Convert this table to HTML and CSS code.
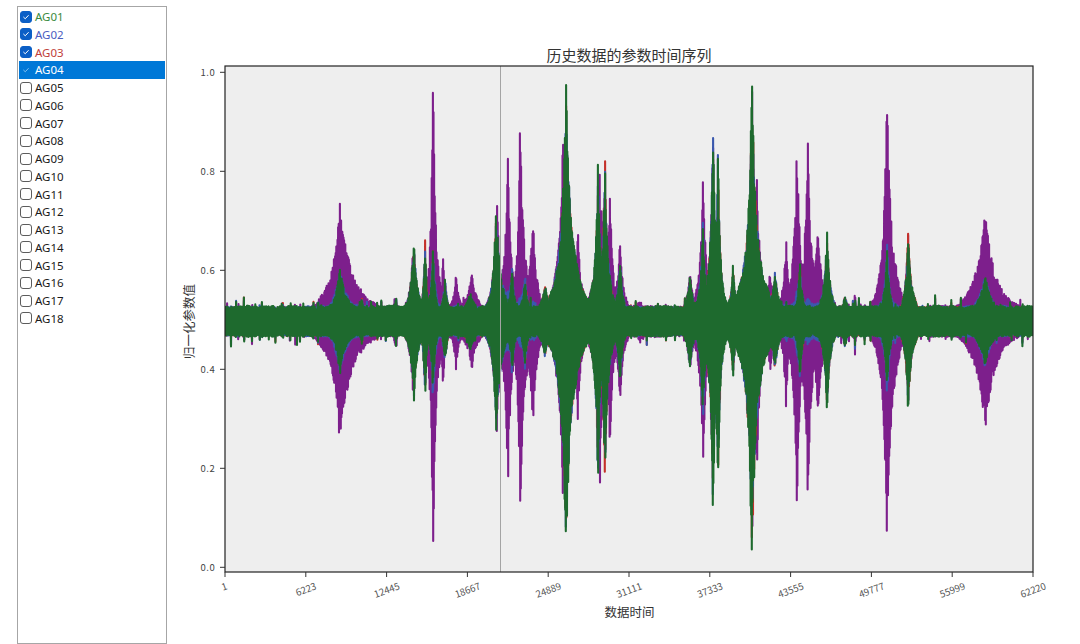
FILE: index.html
```html
<!DOCTYPE html>
<html lang="zh-CN">
<head>
<meta charset="utf-8">
<title>历史数据的参数时间序列</title>
<link rel="stylesheet" href="styles.css">
</head>
<body>
<div class="app">
  <ul class="list">
    <li class="item"><span class="cb on"><svg viewBox="0 0 12 12" class="ck"><path d="M3.2 6.3 L5.1 8.1 L8.8 4.2"/></svg></span><span class="c1">AG01</span></li>
    <li class="item"><span class="cb on"><svg viewBox="0 0 12 12" class="ck"><path d="M3.2 6.3 L5.1 8.1 L8.8 4.2"/></svg></span><span class="c2">AG02</span></li>
    <li class="item"><span class="cb on"><svg viewBox="0 0 12 12" class="ck"><path d="M3.2 6.3 L5.1 8.1 L8.8 4.2"/></svg></span><span class="c3">AG03</span></li>
    <li class="item sel"><span class="cb on"><svg viewBox="0 0 12 12" class="ck"><path d="M3.2 6.3 L5.1 8.1 L8.8 4.2"/></svg></span><span>AG04</span></li>
    <li class="item"><span class="cb"></span><span>AG05</span></li>
    <li class="item"><span class="cb"></span><span>AG06</span></li>
    <li class="item"><span class="cb"></span><span>AG07</span></li>
    <li class="item"><span class="cb"></span><span>AG08</span></li>
    <li class="item"><span class="cb"></span><span>AG09</span></li>
    <li class="item"><span class="cb"></span><span>AG10</span></li>
    <li class="item"><span class="cb"></span><span>AG11</span></li>
    <li class="item"><span class="cb"></span><span>AG12</span></li>
    <li class="item"><span class="cb"></span><span>AG13</span></li>
    <li class="item"><span class="cb"></span><span>AG14</span></li>
    <li class="item"><span class="cb"></span><span>AG15</span></li>
    <li class="item"><span class="cb"></span><span>AG16</span></li>
    <li class="item"><span class="cb"></span><span>AG17</span></li>
    <li class="item"><span class="cb"></span><span>AG18</span></li>
  </ul>
  <svg class="chart" viewBox="167 0 913 644" xmlns="http://www.w3.org/2000/svg">
    <defs>
      <clipPath id="axclip"><rect x="225" y="66" width="808" height="506"/></clipPath>
    </defs>
    <rect class="axbg" x="225" y="66" width="808" height="506"/>
    <g clip-path="url(#axclip)">
      <path id="s-purple" class="series sp"/>
      <path id="s-red" class="series sr"/>
      <path id="s-blue" class="series sb"/>
      <path id="s-green" class="series sg"/>
      <line class="cursor" x1="500.5" y1="66" x2="500.5" y2="572"/>
    </g>
    <rect class="spine" x="225" y="66" width="808" height="506"/>

    <g class="ticks">
      <line x1="220" y1="72.3" x2="225" y2="72.3"/>
      <line x1="220" y1="171.3" x2="225" y2="171.3"/>
      <line x1="220" y1="270.3" x2="225" y2="270.3"/>
      <line x1="220" y1="369.3" x2="225" y2="369.3"/>
      <line x1="220" y1="468.3" x2="225" y2="468.3"/>
      <line x1="220" y1="567.3" x2="225" y2="567.3"/>
      <line x1="225" y1="572" x2="225" y2="577"/>
      <line x1="305.8" y1="572" x2="305.8" y2="577"/>
      <line x1="386.6" y1="572" x2="386.6" y2="577"/>
      <line x1="467.4" y1="572" x2="467.4" y2="577"/>
      <line x1="548.2" y1="572" x2="548.2" y2="577"/>
      <line x1="629" y1="572" x2="629" y2="577"/>
      <line x1="709.8" y1="572" x2="709.8" y2="577"/>
      <line x1="790.6" y1="572" x2="790.6" y2="577"/>
      <line x1="871.4" y1="572" x2="871.4" y2="577"/>
      <line x1="952.2" y1="572" x2="952.2" y2="577"/>
      <line x1="1033" y1="572" x2="1033" y2="577"/>
    </g>

    <g class="ylab">
      <text x="215.5" y="72.3">1.0</text>
      <text x="215.5" y="171.3">0.8</text>
      <text x="215.5" y="270.3">0.6</text>
      <text x="215.5" y="369.3">0.4</text>
      <text x="215.5" y="468.3">0.2</text>
      <text x="215.5" y="567.3">0.0</text>
    </g>
    <g class="xlab">
      <text transform="translate(224,586.2) rotate(-20)">1</text>
      <text transform="translate(305.8,588.9) rotate(-20)">6223</text>
      <text transform="translate(386.6,589.7) rotate(-20)">12445</text>
      <text transform="translate(467.4,589.7) rotate(-20)">18667</text>
      <text transform="translate(548.2,589.7) rotate(-20)">24889</text>
      <text transform="translate(629,589.7) rotate(-20)">31111</text>
      <text transform="translate(709.8,589.7) rotate(-20)">37333</text>
      <text transform="translate(790.6,589.7) rotate(-20)">43555</text>
      <text transform="translate(871.4,589.7) rotate(-20)">49777</text>
      <text transform="translate(952.2,589.7) rotate(-20)">55999</text>
      <text transform="translate(1033,589.7) rotate(-20)">62220</text>
    </g>

    <text class="ttl" x="629" y="54">历史数据的参数时间序列</text>
    <text class="axlabel" x="629.5" y="611">数据时间</text>
    <text class="axlabel" transform="translate(188.5,321.5) rotate(-90)">归一化参数值</text>
  </svg>
</div>
<script src="script.js"></script>
</body>
</html>
```

FILE: styles.css
```css
html, body {
  margin: 0;
  padding: 0;
  background: #ffffff;
}
body {
  width: 1080px;
  height: 644px;
  overflow: hidden;
  font-family: "Noto Sans", "Noto Sans CJK SC", sans-serif;
}
.app {
  display: flex;
  align-items: flex-start;
  height: 644px;
}
.list {
  list-style: none;
  margin: 6px 0 0 17px;
  padding: 0.75px 1px;
  box-sizing: border-box;
  width: 150px;
  height: 638px;
  border: 1px solid #a6a6a6;
  flex: none;
}
.item {
  display: flex;
  align-items: center;
  height: 17.75px;
  font-size: 11.5px;
  color: #1a1a1a;
}
.cb {
  width: 12px;
  height: 12px;
  box-sizing: border-box;
  border: 1px solid #5c5c5c;
  border-radius: 3px;
  margin: 0 3px 0 1px;
  background: #ffffff;
  display: flex;
  align-items: center;
  justify-content: center;
  flex: none;
}
.cb.on {
  background: #0b5fc6;
  border-color: #0b5fc6;
}
.ck {
  width: 12px;
  height: 12px;
  display: block;
}
.ck path {
  fill: none;
  stroke: #ffffff;
  stroke-width: 1.2;
  stroke-linecap: round;
  stroke-linejoin: round;
}
.item.sel {
  background: #0078d7;
  color: #ffffff;
}
.item.sel .cb {
  background: transparent;
  border-color: transparent;
}
.item.sel .ck path {
  stroke: #86c0ef;
}
.c1 { color: #3a8a3e; }
.c2 { color: #4b5cbf; }
.c3 { color: #c0403a; }

.chart {
  display: block;
  width: 913px;
  height: 644px;
  flex: none;
}
.axbg { fill: #eeeeee; }
.spine {
  fill: none;
  stroke: #222222;
  stroke-width: 1.2;
}
.cursor {
  stroke: #a4a4a4;
  stroke-width: 1;
}
.series {
  fill: none;
  stroke-width: 2.1;
  stroke-linejoin: round;
}
.sp { stroke: #7d1f8c; }
.sr { stroke: #c4302a; }
.sb { stroke: #3a58ad; }
.sg { stroke: #1e6a2e; }
.ticks line {
  stroke: #333333;
  stroke-width: 1;
}
.ylab text {
  font-family: "Noto Sans CJK SC", sans-serif;
  font-size: 9.5px;
  fill: #444444;
  text-anchor: end;
  dominant-baseline: central;
  letter-spacing: 0.6px;
}
.xlab text {
  font-family: "Noto Sans CJK SC", sans-serif;
  font-size: 9.5px;
  fill: #555555;
  text-anchor: middle;
  dominant-baseline: central;
}
.ttl {
  font-family: "Noto Sans CJK SC", sans-serif;
  font-size: 15px;
  fill: #333333;
  text-anchor: middle;
  dominant-baseline: central;
}
.axlabel {
  font-family: "Noto Sans CJK SC", sans-serif;
  font-size: 12.5px;
  fill: #333333;
  text-anchor: middle;
  dominant-baseline: central;
}
```

FILE: script.js
```js
(function () {
  function rng(seed) {
    return function () {
      seed |= 0; seed = (seed + 0x6D2B79F5) | 0;
      var t = Math.imul(seed ^ (seed >>> 15), 1 | seed);
      t = (t + Math.imul(t ^ (t >>> 7), 61 | t)) ^ t;
      return ((t ^ (t >>> 14)) >>> 0) / 4294967296;
    };
  }
  var X0 = 225, X1 = 1033, Y0 = 567.3, SC = 495;

  var green = [
    [231,0.055,1],[244,0.062,1],[252,0.045,1],[262,0.05,1.2],[272,0.04,1],
    [283,0.047,1.2],[300,0.045,1.2],[318,0.05,3],[340,0.10,12,16],[362,0.055,4],
    [396,0.055,3],[414,0.16,7],[425,0.17,3],[433,0.16,4],[445,0.09,5],
    [470,0.06,15],[496,0.215,6,9],[512,0.11,5],[525,0.09,6],[545,0.08,10],
    [566,0.5,8,10],[598,0.325,5],[605,0.335,5],[620,0.12,6],[690,0.09,8],
    [703,0.2,5],[713,0.38,5],[718,0.35,4],[733,0.12,5],[752,0.5,8,9],
    [775,0.1,8],[800,0.12,5],[827,0.18,6],[845,0.06,8],[855,0.06,1.5],
    [887,0.145,5],[908,0.18,5,7],[985,0.09,15],[1010,0.045,2]
  ];
  var purple = [
    [323,0.05,5],[340,0.23,16,22],[395,0.055,8],[413,0.15,7],[433,0.49,4,5],
    [443,0.13,5],[456,0.09,8],[472,0.09,15],[497,0.22,7],[508,0.35,6],
    [520,0.41,4,7],[533,0.2,8],[563,0.4,7],[578,0.2,6],[600,0.32,7],
    [610,0.28,5],[620,0.16,7],[640,0.05,10],[690,0.1,8],[703,0.28,6],
    [713,0.36,5],[752,0.5,5],[757,0.3,6],[770,0.1,8],[786,0.18,5],
    [797,0.36,6],[808,0.385,6],[818,0.2,8],[827,0.15,6],[855,0.07,3],
    [887,0.49,6,8],[896,0.12,6],[908,0.17,5],[985,0.21,18,20]
  ];

  function addNoiseSpikes(list, seed) {
    var r = rng(seed);
    for (var x = X0 + 2; x < X1; x += 4 + r() * 8) {
      list.push([x, 0.036 + r() * 0.02, 0.7 + r() * 0.8]);
    }
  }
  addNoiseSpikes(green, 901);
  addNoiseSpikes(purple, 907);

  function env(x, bursts, base) {
    var a = base;
    for (var i = 0; i < bursts.length; i++) {
      var b = bursts[i], d = Math.abs(x - b[0]);
      var w = (x < b[0]) ? b[2] : (b[3] || b[2]);
      var q = 1 + d / w;
      var pk = b[1] > 0.08 ? Math.min(b[1] * 1.08, 0.507) : b[1];
      var v = pk / (q * q);
      if (v > a) a = v;
    }
    return a;
  }

  function makeMod(seed) {
    var r = rng(seed), knots = [];
    for (var k = 0; k <= 300; k++) knots.push(0.86 + 0.14 * r());
    return function (x) {
      var t = (x - X0) / 3, i = Math.floor(t), f = t - i;
      return knots[i] * (1 - f) + knots[i + 1] * f;
    };
  }

  function build(ampFn, seed) {
    var r = rng(seed), mod = makeMod(seed + 101), pts = [], i = 0;
    for (var x = X0; x <= X1 + 0.01; x += 0.3, i++) {
      var a = ampFn(x) * mod(x) / 0.97;
      var m = 1 - 0.35 * r() * r();
      var s = (i % 2) ? 1 : -1;
      var v = 0.497 + s * a * m;
      var y = Y0 - v * SC;
      pts.push((i ? 'L' : 'M') + x.toFixed(2) + ' ' + y.toFixed(1));
    }
    return pts.join('');
  }

  function pBase(x) { return (x > 380 && x < 1000) ? 0.031 : 0.026; }
  function gA(x) { return env(x, green, 0.031); }
  function pA(x) { return env(x, purple, pBase(x)); }
  function bA(x) { var g = gA(x), p = pA(x); return g * 0.95 + Math.max(0, p - g) * 0.07; }
  function rA(x) { return gA(x) * 0.94; }

  document.getElementById('s-purple').setAttribute('d', build(pA, 11));
  document.getElementById('s-red').setAttribute('d', build(rA, 23));
  document.getElementById('s-blue').setAttribute('d', build(bA, 37));
  document.getElementById('s-green').setAttribute('d', build(gA, 51));
})();
```
